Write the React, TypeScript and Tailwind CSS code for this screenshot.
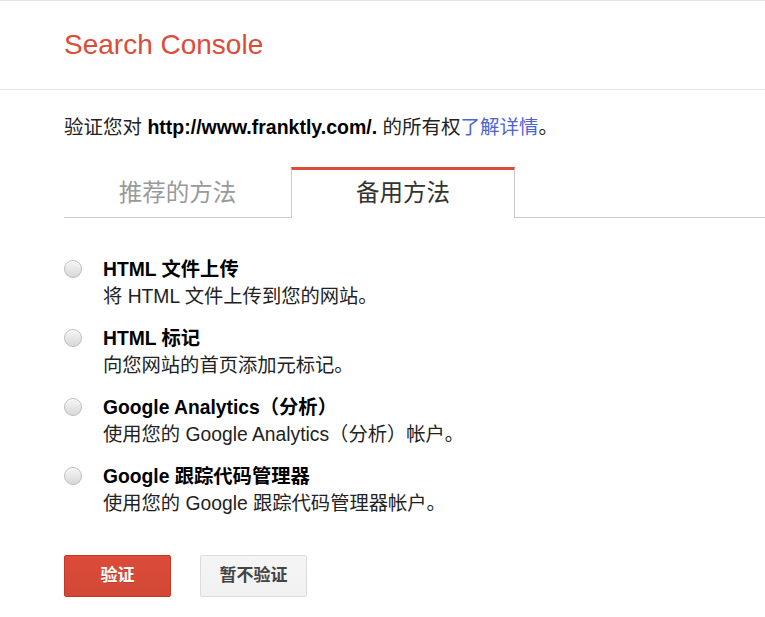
const font = "font-['Liberation_Sans','Noto_Sans_CJK_SC',sans-serif]";

type Method = { title: string; desc: string };

const methods: Method[] = [
  { title: "HTML 文件上传", desc: "将 HTML 文件上传到您的网站。" },
  { title: "HTML 标记", desc: "向您网站的首页添加元标记。" },
  { title: "Google Analytics（分析）", desc: "使用您的 Google Analytics（分析）帐户。" },
  { title: "Google 跟踪代码管理器", desc: "使用您的 Google 跟踪代码管理器帐户。" },
];

function Radio() {
  return (
    <span className="mt-[4px] block h-[18px] w-[18px] shrink-0 rounded-full border border-[#bdbdbd] bg-gradient-to-b from-[#f6f6f6] to-[#d8d8d8] shadow-[inset_0_1px_0_#fff]" />
  );
}

export default function App() {
  return (
    <div className={`min-h-screen bg-white ${font}`}>
      <header className="flex h-[90px] items-center border-y border-[#e5e5e5] pl-[64px]">
        <h1 className="text-[28px] leading-none text-[#dd4b39]">Search Console</h1>
      </header>

      <main className="pl-[64px]">
        <p className="mt-[23px] text-[19.5px] leading-[28px] text-[#222]">
          验证您对 <b className="text-black">http://www.franktly.com/.</b> 的所有权
          <a className="text-[#4a64d0]">了解详情</a>。
        </p>

        <div className="mt-[26px] flex border-b border-[#cccccc]">
          <div className="flex h-[50px] w-[227px] items-center justify-center pt-[3px] text-[23.5px] text-[#999]">
            推荐的方法
          </div>
          <div className="-mb-px flex h-[51px] w-[224px] items-center justify-center border-x border-t-[3px] border-x-[#cccccc] border-t-[#dd4b39] bg-white text-[23.5px] text-[#333]">
            备用方法
          </div>
        </div>

        <ul className="mt-[38px] flex flex-col gap-[15px]">
          {methods.map((m) => (
            <li key={m.title} className="flex gap-[21px]">
              <Radio />
              <div className="text-[19.3px] leading-[27px]">
                <div className="font-bold text-black">{m.title}</div>
                <div className="text-[#222]">{m.desc}</div>
              </div>
            </li>
          ))}
        </ul>

        <div className="mt-[38px] flex gap-[29px]">
          <button className="h-[42px] w-[107px] rounded-[2px] border border-[#c53727] bg-gradient-to-b from-[#dd4b39] to-[#d14836] text-[17px] font-bold text-white [text-shadow:0_1px_rgba(0,0,0,0.15)]">
            验证
          </button>
          <button className="h-[42px] w-[107px] rounded-[2px] border border-[#dcdcdc] bg-gradient-to-b from-[#f5f5f5] to-[#f1f1f1] text-[17px] font-bold text-[#444]">
            暂不验证
          </button>
        </div>
      </main>
    </div>
  );
}
